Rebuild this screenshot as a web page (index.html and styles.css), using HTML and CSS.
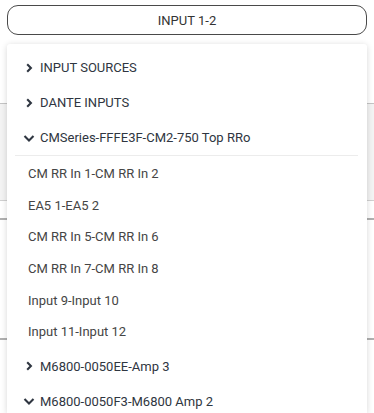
FILE: index.html
```
<!DOCTYPE html>
<html>
<head>
<meta charset="utf-8">
<link rel="stylesheet" href="styles.css">
</head>
<body>
<div class="page">
  <div class="top">
    <button class="select">INPUT 1-2</button>
  </div>
  <div class="bg">
    <div class="gap-a"></div>
    <div class="band"></div>
    <div class="gap-b"></div>
    <div class="rule"></div>
    <div class="gap-c"></div>
    <div class="rule"></div>
  </div>

  <div class="menu">
    <div class="group">
      <svg class="chev" viewBox="0 0 12 12"><path d="M4.2 2.3 L7.9 6 L4.2 9.7"/></svg>
      <span>INPUT SOURCES</span>
    </div>
    <div class="group">
      <svg class="chev" viewBox="0 0 12 12"><path d="M4.2 2.3 L7.9 6 L4.2 9.7"/></svg>
      <span>DANTE INPUTS</span>
    </div>
    <div class="group">
      <svg class="chev" viewBox="0 0 12 12"><path d="M1.5 4 L6 8.5 L10.5 4"/></svg>
      <span>CMSeries-FFFE3F-CM2-750 Top RRo</span>
    </div>
    <div class="divider"></div>
    <div class="items">
      <div class="item">CM RR In 1-CM RR In 2</div>
      <div class="item">EA5 1-EA5 2</div>
      <div class="item">CM RR In 5-CM RR In 6</div>
      <div class="item">CM RR In 7-CM RR In 8</div>
      <div class="item">Input 9-Input 10</div>
      <div class="item">Input 11-Input 12</div>
    </div>
    <div class="group">
      <svg class="chev" viewBox="0 0 12 12"><path d="M4.2 2.3 L7.9 6 L4.2 9.7"/></svg>
      <span>M6800-0050EE-Amp 3</span>
    </div>
    <div class="group">
      <svg class="chev" viewBox="0 0 12 12"><path d="M1.5 4 L6 8.5 L10.5 4"/></svg>
      <span>M6800-0050F3-M6800 Amp 2</span>
    </div>
  </div>
</div>
</body>
</html>
```

FILE: styles.css
```
* { box-sizing: border-box; }
html, body {
  margin: 0;
  padding: 0;
  background: #fff;
  font-family: Roboto, "Liberation Sans", sans-serif;
  overflow: hidden;
}
.page {
  position: relative;
  width: 374px;
  height: 413px;
  overflow: hidden;
}
.top {
  padding: 5px 7px 0 7px;
}
.select {
  display: block;
  width: 360px;
  height: 30px;
  border: 1px solid #4a4a4a;
  border-radius: 11px;
  background: #fff;
  font-family: Roboto, "Liberation Sans", sans-serif;
  font-size: 13px;
  color: #333;
  padding: 0;
}
.bg {
  display: flex;
  flex-direction: column;
}
.gap-a { height: 68px; }
.band {
  height: 98px;
  background: #f3f3f3;
  border-top: 1px solid #c4c4c4;
  border-bottom: 1px solid #d0d0d0;
}
.gap-b { height: 17px; }
.rule {
  height: 2px;
  background: #b0b0b0;
}
.gap-c { height: 118px; }

.menu {
  position: absolute;
  left: 7px;
  top: 44px;
  bottom: 0;
  width: 360px;
  background: #fff;
  border-radius: 3px 3px 0 0;
  box-shadow: 0 1px 6px rgba(0, 0, 0, 0.16);
  padding-top: 6px;
  display: flex;
  flex-direction: column;
  overflow: hidden;
}
.group {
  height: 35px;
  flex: none;
  display: flex;
  align-items: center;
  gap: 5px;
  padding-left: 16px;
  font-size: 13px;
  color: #2f3641;
}
.chev {
  width: 12px;
  height: 12px;
  flex: none;
}
.chev path {
  fill: none;
  stroke: #2f3641;
  stroke-width: 2.1;
}
.divider {
  height: 1px;
  flex: none;
  margin: 0 9px 0 8px;
  background: #ececec;
}
.items {
  flex: none;
  padding-top: 2px;
  padding-bottom: 1px;
}
.item {
  height: 31.6px;
  display: flex;
  align-items: center;
  padding-left: 21px;
  font-size: 13px;
  color: #454545;
}
```
